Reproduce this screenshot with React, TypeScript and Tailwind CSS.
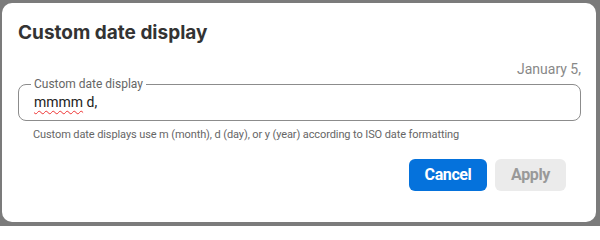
export default function App() {
  return (
    <div className="w-[600px] h-[226px] bg-[#7b7b7b] pt-[3px] pl-[2px] overflow-hidden" style={{ fontFamily: "Roboto, 'Noto Sans', sans-serif" }}>
      <div className="w-[594px] h-[219px] bg-white rounded-[10px] pl-4 pr-[15px] pt-[17px]">
        <h2 className="text-[19px] leading-[26px] font-bold text-[#333] font-['Inter',sans-serif]">Custom date display</h2>

        <div className="mt-[15px] text-right text-[14px] leading-[16px] text-[#888]">January 5,</div>

        <fieldset className="h-[44px] border border-[#8c8c8c] rounded-lg px-[15px] pb-[4px]">
          <legend className="px-[3px] -ml-[3px] text-[12px] leading-[14px] text-[#666]">Custom date display</legend>
          <div className="text-[14px] leading-[18px] text-[#222] mt-[2px]">
            <span className="underline decoration-wavy decoration-[#e33] decoration-1 underline-offset-[3px]">mmmm</span> d,
          </div>
        </fieldset>

        <p className="mt-[6px] pl-[15px] text-[11px] leading-[16px] tracking-[-0.1px] text-[#666]">
          Custom date displays use m (month), d (day), or y (year) according to ISO date formatting
        </p>

        <div className="mt-[16px] flex justify-end gap-2 pr-[15px]">
          <button className="w-[78px] h-[32px] rounded-md bg-[#0572dc] text-white text-[16px] font-bold tracking-tight">Cancel</button>
          <button className="w-[71px] h-[32px] rounded-md bg-[#ebebeb] text-[#999] text-[16px] font-bold tracking-tight">Apply</button>
        </div>
      </div>
    </div>
  );
}
